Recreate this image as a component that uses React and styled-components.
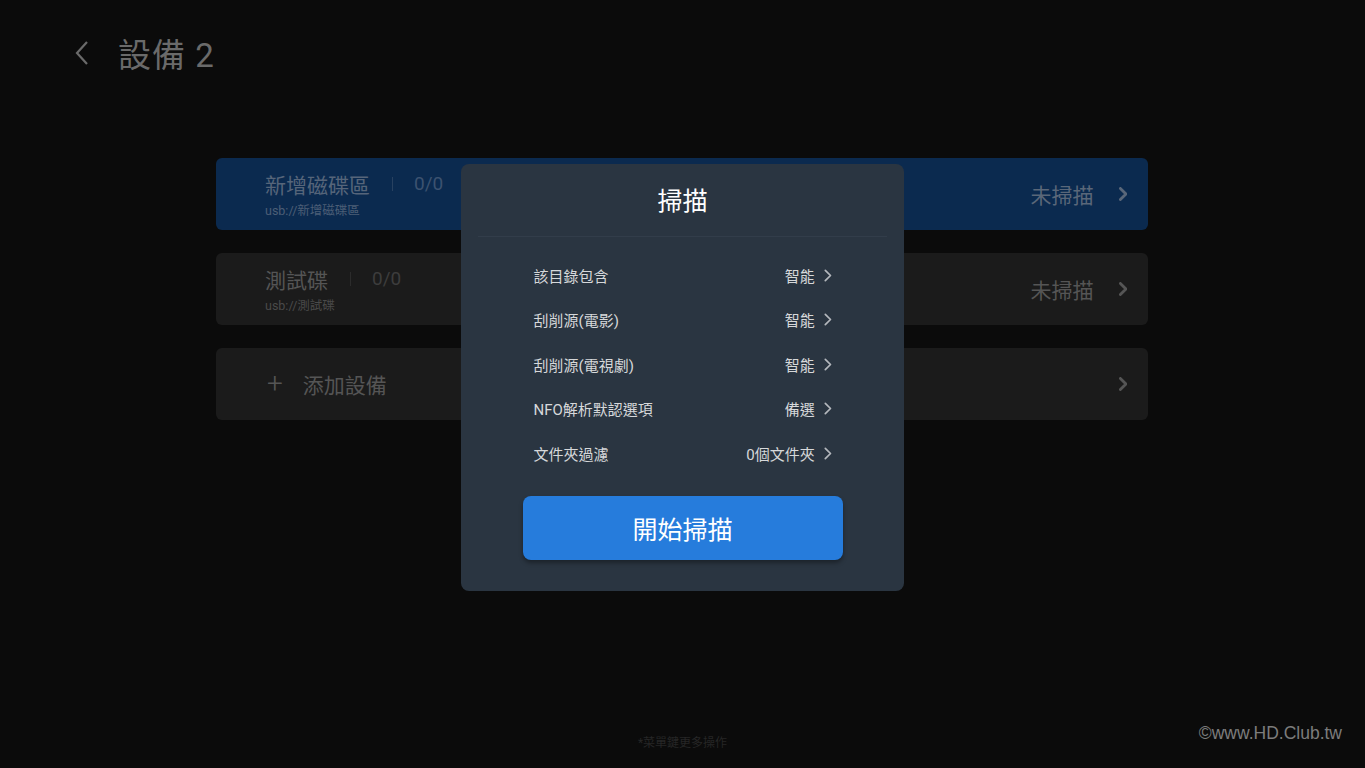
import React from 'react';
import styled, { createGlobalStyle } from 'styled-components';

const Global = createGlobalStyle`
  html, body {
    margin: 0;
    padding: 0;
    background: #0b0b0b;
  }
  body {
    font-family: Roboto, "Noto Sans CJK TC", "Noto Sans", sans-serif;
  }
`;

const Page = styled.div`
  position: relative;
  width: 1365px;
  height: 768px;
  overflow: hidden;
  background: #0b0b0b;
`;

const Header = styled.div`
  display: flex;
  align-items: center;
  height: 48px;
  padding: 29px 0 0 74px;
`;

const BackBtn = styled.div`
  width: 22px;
  height: 30px;
  display: flex;
  align-items: center;
  margin-right: 22px;
`;

const Title = styled.h1`
  margin: 0;
  font-size: 33px;
  font-weight: 400;
  color: #6a6a6a;
  letter-spacing: 1px;
`;

const List = styled.div`
  display: flex;
  flex-direction: column;
  gap: 23px;
  width: 932px;
  margin: 81px 0 0 216px;
`;

const Card = styled.div`
  height: 72px;
  border-radius: 6px;
  background: ${p => (p.$active ? '#0b2a4f' : '#1b1b1b')};
  display: flex;
  align-items: center;
  padding: 0 21px 0 49px;
  box-sizing: border-box;
`;

const Info = styled.div`
  display: flex;
  flex-direction: column;
  justify-content: center;
`;

const NameRow = styled.div`
  display: flex;
  align-items: center;
  height: 28px;
`;

const Name = styled.span`
  font-size: 21px;
  color: ${p => (p.$active ? '#56657a' : '#555555')};
`;

const Sep = styled.span`
  width: 1px;
  height: 14px;
  margin: 0 21px 0 22px;
  background: ${p => (p.$active ? '#284160' : '#2c2c2c')};
`;

const Count = styled.span`
  font-size: 19px;
  color: ${p => (p.$active ? '#3c5270' : '#3d3d3d')};
`;

const Path = styled.span`
  font-size: 12.5px;
  margin-top: 2px;
  color: ${p => (p.$active ? '#4c5e76' : '#4a4a4a')};
`;

const Spacer = styled.div`
  flex: 1;
`;

const Status = styled.span`
  font-size: 21px;
  color: ${p => (p.$active ? '#5a6779' : '#555555')};
  margin-right: 25px;
`;

const AddIcon = styled.span`
  font-size: 28px;
  font-weight: 300;
  color: #555;
  margin: 0 20px 0 2px;
  line-height: 1;
`;

const AddText = styled.span`
  font-size: 21px;
  color: #555;
`;

const Overlay = styled.div`
  position: absolute;
  left: 461px;
  top: 164px;
  width: 443px;
  height: 427px;
  background: #2a3541;
  border-radius: 8px;
  display: flex;
  flex-direction: column;
  align-items: center;
  box-sizing: border-box;
  padding: 0 17px;
`;

const DialogTitle = styled.div`
  height: 73px;
  width: 100%;
  display: flex;
  align-items: center;
  justify-content: center;
  font-size: 25px;
  color: #ffffff;
  border-bottom: 1px solid #323d4a;
  padding-bottom: 3px;
  box-sizing: border-box;
`;

const Options = styled.div`
  width: 298px;
  margin-top: 16px;
  display: flex;
  flex-direction: column;
`;

const Option = styled.div`
  display: flex;
  align-items: center;
  height: 44.5px;
  font-size: 15px;
  color: #d6d8da;
`;

const OptValue = styled.span`
  margin-left: auto;
  margin-right: 9px;
`;

const StartBtn = styled.button`
  margin-top: 20px;
  width: 320px;
  height: 64px;
  border: none;
  border-radius: 8px;
  background: #267cdc;
  color: #fff;
  font-family: inherit;
  font-size: 25px;
  box-shadow: 0 3px 4px rgba(0, 0, 0, 0.35);
`;

const Hint = styled.div`
  position: absolute;
  left: 0;
  right: 0;
  bottom: 18px;
  text-align: center;
  font-size: 12px;
  color: #262626;
`;

const Watermark = styled.div`
  position: absolute;
  right: 23px;
  bottom: 24px;
  font-family: "Liberation Sans", Arial, sans-serif;
  font-size: 17.5px;
  color: #7c7c7c;
`;

const Chevron = ({ size = 14, color = '#6a6a6a', width = 2 }) => (
  <svg width={size * 0.6} height={size} viewBox="0 0 6 10" fill="none">
    <path d="M1 1l4 4-4 4" stroke={color} strokeWidth={width} strokeLinecap="round" strokeLinejoin="round" />
  </svg>
);

const options = [
  ['該目錄包含', '智能'],
  ['刮削源(電影)', '智能'],
  ['刮削源(電視劇)', '智能'],
  ['NFO解析默認選項', '備選'],
  ['文件夾過濾', '0個文件夾'],
];

const devices = [
  { name: '新增磁碟區', path: 'usb://新增磁碟區', active: true },
  { name: '測試碟', path: 'usb://測試碟', active: false },
];

export default function App() {
  return (
    <Page>
      <Global />
      <Header>
        <BackBtn>
          <svg width="16" height="26" viewBox="0 0 16 26" fill="none">
            <path d="M13 2L3 13l10 11" stroke="#6a6a6a" strokeWidth="2.2" />
          </svg>
        </BackBtn>
        <Title>設備 2</Title>
      </Header>
      <List>
        {devices.map(d => (
          <Card key={d.name} $active={d.active}>
            <Info>
              <NameRow>
                <Name $active={d.active}>{d.name}</Name>
                <Sep $active={d.active} />
                <Count $active={d.active}>0/0</Count>
              </NameRow>
              <Path $active={d.active}>{d.path}</Path>
            </Info>
            <Spacer />
            <Status $active={d.active}>未掃描</Status>
            <Chevron size={14} color={d.active ? '#5a6779' : '#555'} width={2} />
          </Card>
        ))}
        <Card>
          <AddIcon>+</AddIcon>
          <AddText>添加設備</AddText>
          <Spacer />
          <Chevron size={14} color="#555" width={2} />
        </Card>
      </List>
      <Overlay>
        <DialogTitle>掃描</DialogTitle>
        <Options>
          {options.map(([label, value]) => (
            <Option key={label}>
              <span>{label}</span>
              <OptValue>{value}</OptValue>
              <Chevron size={13} color="#b4b8bd" width={1.3} />
            </Option>
          ))}
        </Options>
        <StartBtn>開始掃描</StartBtn>
      </Overlay>
      <Hint>*菜單鍵更多操作</Hint>
      <Watermark>©www.HD.Club.tw</Watermark>
    </Page>
  );
}
